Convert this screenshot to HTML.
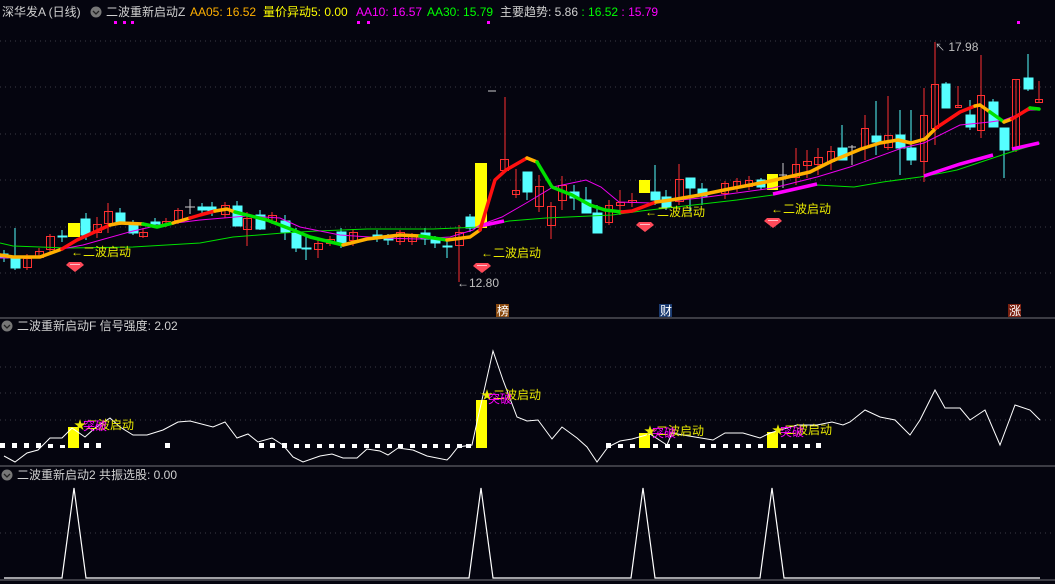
<!DOCTYPE html>
<html><head><meta charset="utf-8"><style>
html,body{margin:0;padding:0;background:#05050f;}
svg{display:block;}
text{font-family:"Liberation Sans","Noto Sans CJK SC",sans-serif;font-size:12px;}
</style></head><body>
<svg width="1055" height="584" viewBox="0 0 1055 584" xmlns="http://www.w3.org/2000/svg">
<rect width="1055" height="584" fill="#05050f"/>
<g stroke="#3a3a44" stroke-dasharray="1,4" stroke-width="1">
<line x1="0" y1="41" x2="1055" y2="41"/><line x1="0" y1="87" x2="1055" y2="87"/>
<line x1="0" y1="134" x2="1055" y2="134"/><line x1="0" y1="180" x2="1055" y2="180"/>
<line x1="0" y1="227" x2="1055" y2="227"/><line x1="0" y1="273" x2="1055" y2="273"/>
<line x1="0" y1="367" x2="1055" y2="367"/><line x1="0" y1="393" x2="1055" y2="393"/>
<line x1="0" y1="420" x2="1055" y2="420"/><line x1="0" y1="533" x2="1055" y2="533"/>
</g>
<g stroke="#3c3c44" stroke-width="2">
<line x1="0" y1="318" x2="1055" y2="318"/><line x1="0" y1="466" x2="1055" y2="466"/><line x1="0" y1="580" x2="1055" y2="580"/>
</g>
<text x="2" y="16" fill="#d0d0d0">深华发A (日线)</text>
<circle cx="96" cy="12" r="5.5" fill="#777"/><path d="M93 11l3 3 3-3" stroke="#222" fill="none" stroke-width="1.3"/>
<text x="106" y="16" fill="#d0d0d0">二波重新启动Z</text>
<text x="190" y="16" fill="#ffb000">AA05: 16.52</text>
<text x="263" y="16" fill="#ffff00">量价异动5: 0.00</text>
<text x="356" y="16" fill="#ff00ff">AA10: 16.57</text>
<text x="427" y="16" fill="#00ff00">AA30: 15.79</text>
<text x="500" y="16" fill="#d0d0d0">主要趋势: 5.86 <tspan fill="#00ff00">: 16.52</tspan><tspan fill="#ff00ff"> : 15.79</tspan></text>
<g fill="#ff00ff"><rect x="114" y="21" width="3" height="3"/><rect x="123" y="21" width="3" height="3"/><rect x="131" y="21" width="3" height="3"/><rect x="357" y="21" width="3" height="3"/><rect x="367" y="21" width="3" height="3"/><rect x="487" y="21" width="3" height="3"/><rect x="1017" y="21" width="3" height="3"/></g>
<g stroke-width="1">
<g stroke="#55ffff" fill="#55ffff">
<line x1="4" y1="250" x2="4" y2="262"/><rect x="0" y="254" width="8" height="4"/>
<line x1="15" y1="228" x2="15" y2="270"/><rect x="11" y="258" width="9" height="10"/>
<line x1="62" y1="230" x2="62" y2="242"/><rect x="58" y="236" width="9" height="1"/>
<line x1="86" y1="213" x2="86" y2="240"/><rect x="81" y="219" width="9" height="16"/>
<line x1="120" y1="208" x2="120" y2="225"/><rect x="116" y="213" width="9" height="9"/>
<line x1="133" y1="220" x2="133" y2="235"/><rect x="129" y="225" width="9" height="8"/>
<line x1="155" y1="218" x2="155" y2="228"/><rect x="151" y="222" width="9" height="2"/>
<line x1="202" y1="203" x2="202" y2="213"/><rect x="198" y="207" width="9" height="3"/>
<line x1="212" y1="202" x2="212" y2="216"/><rect x="208" y="207" width="8" height="5"/>
<line x1="237" y1="201" x2="237" y2="226"/><rect x="233" y="206" width="9" height="20"/>
<line x1="260" y1="210" x2="260" y2="230"/><rect x="256" y="215" width="9" height="14"/>
<line x1="285" y1="215" x2="285" y2="240"/><rect x="281" y="221" width="9" height="11"/>
<line x1="296" y1="228" x2="296" y2="252"/><rect x="292" y="233" width="9" height="15"/>
<line x1="306" y1="236" x2="306" y2="260"/><rect x="302" y="248" width="9" height="1"/>
<line x1="341" y1="228" x2="341" y2="248"/><rect x="337" y="232" width="9" height="11"/>
<line x1="377" y1="230" x2="377" y2="242"/><rect x="373" y="235" width="9" height="3"/>
<line x1="388" y1="234" x2="388" y2="245"/><rect x="384" y="237" width="9" height="3"/>
<line x1="425" y1="228" x2="425" y2="245"/><rect x="421" y="233" width="9" height="6"/>
<line x1="435" y1="236" x2="435" y2="248"/><rect x="431" y="240" width="9" height="3"/>
<line x1="447" y1="240" x2="447" y2="258"/><rect x="443" y="246" width="9" height="1"/>
<line x1="470" y1="214" x2="470" y2="232"/><rect x="466" y="217" width="9" height="11"/>
<line x1="527" y1="175" x2="527" y2="200"/><rect x="523" y="172" width="9" height="20"/>
<line x1="574" y1="185" x2="574" y2="210"/><rect x="570" y="192" width="9" height="6"/>
<line x1="586" y1="187" x2="586" y2="213"/><rect x="582" y="200" width="9" height="13"/>
<line x1="597" y1="205" x2="597" y2="233"/><rect x="593" y="213" width="9" height="20"/>
<line x1="655" y1="165" x2="655" y2="205"/><rect x="651" y="192" width="9" height="8"/>
<line x1="666" y1="190" x2="666" y2="210"/><rect x="662" y="197" width="9" height="10"/>
<line x1="690" y1="178" x2="690" y2="212"/><rect x="686" y="178" width="9" height="10"/>
<line x1="702" y1="183" x2="702" y2="205"/><rect x="698" y="189" width="9" height="7"/>
<line x1="761" y1="178" x2="761" y2="190"/><rect x="757" y="180" width="8" height="7"/>
<line x1="842" y1="125" x2="842" y2="160"/><rect x="838" y="148" width="9" height="12"/>
<line x1="876" y1="101" x2="876" y2="155"/><rect x="872" y="136" width="9" height="6"/>
<line x1="900" y1="110" x2="900" y2="175"/><rect x="896" y="135" width="9" height="13"/>
<line x1="911" y1="110" x2="911" y2="165"/><rect x="907" y="148" width="9" height="12"/>
<line x1="946" y1="82" x2="946" y2="108"/><rect x="942" y="84" width="8" height="24"/>
<line x1="970" y1="100" x2="970" y2="130"/><rect x="966" y="115" width="9" height="12"/>
<line x1="993" y1="99" x2="993" y2="127"/><rect x="989" y="102" width="9" height="25"/>
<line x1="1004" y1="128" x2="1004" y2="178"/><rect x="1000" y="128" width="9" height="22"/>
<line x1="1028" y1="54" x2="1028" y2="91"/><rect x="1024" y="78" width="9" height="11"/>
</g>
<g stroke="#ff3030" fill="none">
<line x1="27" y1="254" x2="27" y2="270"/><rect x="23.5" y="258.5" width="8" height="9"/>
<line x1="39" y1="248" x2="39" y2="258"/><rect x="35.5" y="251.5" width="8" height="6"/>
<line x1="50" y1="234" x2="50" y2="252"/><rect x="46.5" y="236.5" width="8" height="13"/>
<line x1="97" y1="217" x2="97" y2="238"/><rect x="93.5" y="224.5" width="8" height="8"/>
<line x1="108" y1="203" x2="108" y2="233"/><rect x="104.5" y="211.5" width="8" height="12"/>
<line x1="143" y1="228" x2="143" y2="238"/><rect x="139.5" y="232.5" width="8" height="4"/>
<line x1="166" y1="218" x2="166" y2="227"/><rect x="162.5" y="221.5" width="8" height="3"/>
<line x1="178" y1="208" x2="178" y2="224"/><rect x="174.5" y="210.5" width="8" height="10"/>
<line x1="225" y1="202" x2="225" y2="218"/><rect x="221.5" y="205.5" width="8" height="9"/>
<line x1="247" y1="212" x2="247" y2="246"/><rect x="243.5" y="218.5" width="8" height="11"/>
<line x1="272" y1="212" x2="272" y2="224"/><rect x="268.5" y="215.5" width="8" height="6"/>
<line x1="318" y1="238" x2="318" y2="258"/><rect x="314.5" y="243.5" width="8" height="6"/>
<line x1="330" y1="236" x2="330" y2="246"/><rect x="326.5" y="239.5" width="8" height="4"/>
<line x1="353" y1="229" x2="353" y2="246"/><rect x="349.5" y="232.5" width="8" height="8"/>
<line x1="400" y1="230" x2="400" y2="245"/><rect x="396.5" y="232.5" width="8" height="9"/>
<line x1="412" y1="233" x2="412" y2="245"/><rect x="408.5" y="236.5" width="8" height="5"/>
<line x1="459" y1="225" x2="459" y2="282"/><rect x="455.5" y="232.5" width="8" height="13"/>
<line x1="505" y1="97" x2="505" y2="171"/><rect x="500.5" y="159.5" width="8" height="11"/>
<line x1="516" y1="169" x2="516" y2="198"/><rect x="512.5" y="190.5" width="7" height="4"/>
<line x1="539" y1="175" x2="539" y2="212"/><rect x="535.5" y="186.5" width="8" height="20"/>
<line x1="551" y1="202" x2="551" y2="239"/><rect x="547.5" y="206.5" width="8" height="19"/>
<line x1="562" y1="176" x2="562" y2="210"/><rect x="558.5" y="185.5" width="8" height="15"/>
<line x1="609" y1="200" x2="609" y2="225"/><rect x="605.5" y="205.5" width="7" height="17"/>
<line x1="620" y1="190" x2="620" y2="215"/><rect x="616.5" y="202.5" width="8" height="3"/>
<line x1="632" y1="193" x2="632" y2="207"/><rect x="628.5" y="200.5" width="8" height="2"/>
<line x1="679" y1="164" x2="679" y2="205"/><rect x="675.5" y="179.5" width="8" height="22"/>
<line x1="725" y1="181" x2="725" y2="199"/><rect x="721.5" y="183.5" width="7" height="10"/>
<line x1="737" y1="178" x2="737" y2="192"/><rect x="733.5" y="181.5" width="7" height="6"/>
<line x1="749" y1="176" x2="749" y2="190"/><rect x="745.5" y="180.5" width="7" height="6"/>
<line x1="796" y1="148" x2="796" y2="185"/><rect x="792.5" y="164.5" width="7" height="13"/>
<line x1="807" y1="150" x2="807" y2="178"/><rect x="803.5" y="161.5" width="8" height="4"/>
<line x1="818" y1="148" x2="818" y2="175"/><rect x="814.5" y="157.5" width="8" height="7"/>
<line x1="831" y1="146" x2="831" y2="170"/><rect x="827.5" y="151.5" width="7" height="10"/>
<line x1="865" y1="115" x2="865" y2="160"/><rect x="861.5" y="128.5" width="7" height="19"/>
<line x1="888" y1="96" x2="888" y2="150"/><rect x="884.5" y="135.5" width="8" height="12"/>
<line x1="924" y1="88" x2="924" y2="182"/><rect x="920.5" y="115.5" width="7" height="46"/>
<line x1="935" y1="42" x2="935" y2="145"/><rect x="931.5" y="84.5" width="7" height="44"/>
<line x1="958" y1="86" x2="958" y2="108"/><rect x="955.5" y="105.5" width="6" height="2"/>
<line x1="981" y1="55" x2="981" y2="138"/><rect x="977.5" y="95.5" width="7" height="35"/>
<line x1="1016" y1="79" x2="1016" y2="152"/><rect x="1012.5" y="79.5" width="7" height="70"/>
<line x1="1039" y1="81" x2="1039" y2="102"/><rect x="1035.5" y="99.5" width="7" height="3"/>
</g>
<g stroke="#cccccc"><line x1="190" y1="199" x2="190" y2="214"/><line x1="185" y1="207" x2="195" y2="207"/>
<line x1="783" y1="163" x2="783" y2="188"/><line x1="779" y1="175" x2="787" y2="175"/>
<line x1="852" y1="145" x2="852" y2="165"/><line x1="848" y1="147" x2="856" y2="147"/>
<line x1="488" y1="91" x2="496" y2="91"/></g>
</g>
<g fill="#ffff00"><rect x="68" y="223" width="12" height="14"/><rect x="475" y="163" width="12" height="65"/><rect x="639" y="180" width="11" height="13"/><rect x="767" y="174" width="11" height="16"/></g>
<polyline fill="none" stroke="#00e000" stroke-width="1" points="0,243 13,246 67,248 133,247 200,243 233,237 283,233 317,231 367,229 433,229 480,227 509,221 546,218 612,215 641,211 737,200 773,195 817,185 854,187 883,182 920,177 942,173 957,170 1008,153 1040,143"/>
<polyline fill="none" stroke="#ee00ee" stroke-width="1" points="0,258 43,257 62,249 83,245 133,231 160,225 200,220 247,216 280,218 300,227 340,235 383,238 417,239 450,237 473,230 480,225 502,217 528,202 553,187 586,180 601,187 619,202 652,203 700,198 773,188 817,177 850,167 902,148 924,143 960,125 990,122 1004,120 1030,110 1040,110"/>
<polyline fill="none" stroke="#ff00ff" stroke-width="3.5" points="480,226 504,221"/>
<polyline fill="none" stroke="#ff00ff" stroke-width="3.5" points="773,194 817,184"/>
<polyline fill="none" stroke="#ff00ff" stroke-width="3.5" points="924,176 960,164 993,155"/>
<polyline fill="none" stroke="#ff00ff" stroke-width="3.5" points="1012,149 1039,143"/>
<g fill="none" stroke-width="3.5" stroke-linejoin="round" stroke-linecap="round">
<polyline stroke="#ffb000" points="0,255 13,257 40,257 62,249"/>
<polyline stroke="#ff1010" points="62,249 77,240 110,225"/>
<polyline stroke="#ffb000" points="110,225 120,223 143,224"/>
<polyline stroke="#00e000" points="143,224 157,227 173,223"/>
<polyline stroke="#ffb000" points="173,223 190,218"/>
<polyline stroke="#ff1010" points="190,218 200,215 215,211"/>
<polyline stroke="#ffb000" points="215,211 227,209 235,212"/>
<polyline stroke="#00e000" points="235,212 267,220 293,230 310,237 343,245"/>
<polyline stroke="#ffb000" points="343,245 367,239 400,235 420,236"/>
<polyline stroke="#00e000" points="420,236 447,240"/>
<polyline stroke="#ffb000" points="447,240 470,237 480,230"/>
<polyline stroke="#ff1010" points="480,230 495,180 506,170 527,158"/>
<polyline stroke="#ffb000" points="527,158 537,162"/>
<polyline stroke="#00e000" points="537,162 552,187 572,195 590,205 605,210 622,212"/>
<polyline stroke="#ff1010" points="622,212 632,211 656,202"/>
<polyline stroke="#ffb000" points="656,202 671,200 700,195 729,189 766,182 810,172 832,161 861,149 880,143 898,140 911,143 925,139 936,128"/>
<polyline stroke="#ff1010" points="936,128 960,112 975,106"/>
<polyline stroke="#ffb000" points="975,106 980,105 990,112"/>
<polyline stroke="#00e000" points="990,112 1004,122"/>
<polyline stroke="#ffb000" points="1004,122 1012,119"/>
<polyline stroke="#ff1010" points="1012,119 1030,108"/>
<polyline stroke="#00e000" points="1030,108 1039,109"/>
</g>
<g fill="#e8e800"><text x="71" y="256">←二波启动</text><text x="481" y="257">←二波启动</text><text x="645" y="216">←二波启动</text><text x="771" y="213">←二波启动</text></g>
<g fill="#ff4a5a"><path d="M69 262h12l3 3-9 7-9-7z"/><path d="M476 263h12l3 3-9 7-9-7z"/><path d="M639 222h12l3 3-9 7-9-7z"/><path d="M767 218h12l3 3-9 7-9-7z"/></g>
<g fill="#ffc0c8"><rect x="70" y="264" width="10" height="1"/><rect x="477" y="265" width="10" height="1"/><rect x="640" y="224" width="10" height="1"/><rect x="768" y="220" width="10" height="1"/></g>
<text x="457" y="287" fill="#c0c0c0">←12.80</text>
<text x="935" y="51" fill="#c0c0c0"><tspan font-size="10">↖</tspan> 17.98</text>
<rect x="496" y="304" width="13" height="13" fill="#8a4a10"/><text x="497" y="315" fill="#fff" font-size="11">榜</text>
<rect x="659" y="304" width="13" height="13" fill="#1a3a70"/><text x="660" y="315" fill="#fff" font-size="11">财</text>
<rect x="1008" y="304" width="13" height="13" fill="#7a2010"/><text x="1009" y="315" fill="#fff" font-size="11">涨</text>
<circle cx="7" cy="326" r="5.5" fill="#777"/><path d="M4 325l3 3 3-3" stroke="#222" fill="none" stroke-width="1.3"/>
<text x="17" y="330" fill="#d0d0d0">二波重新启动F  信号强度: 2.02</text>
<g fill="#ffffff">
<rect x="0" y="443" width="5" height="5"/><rect x="12" y="443" width="5" height="5"/><rect x="24" y="443" width="5" height="5"/><rect x="36" y="443" width="5" height="5"/><rect x="48" y="444" width="5" height="4"/><rect x="60" y="445" width="5" height="3"/><rect x="84" y="443" width="5" height="5"/><rect x="96" y="443" width="5" height="5"/><rect x="165" y="443" width="5" height="5"/>
<rect x="259" y="443" width="5" height="5"/><rect x="270" y="443" width="5" height="5"/><rect x="282" y="443" width="5" height="5"/><rect x="294" y="444" width="5" height="4"/><rect x="305" y="444" width="5" height="4"/><rect x="317" y="444" width="5" height="4"/><rect x="329" y="444" width="5" height="4"/><rect x="340" y="444" width="5" height="4"/><rect x="352" y="444" width="5" height="4"/><rect x="364" y="444" width="5" height="4"/><rect x="375" y="444" width="5" height="4"/><rect x="387" y="444" width="5" height="4"/><rect x="398" y="444" width="5" height="4"/><rect x="410" y="444" width="5" height="4"/><rect x="422" y="444" width="5" height="4"/><rect x="433" y="444" width="5" height="4"/><rect x="445" y="444" width="5" height="4"/><rect x="457" y="444" width="5" height="4"/><rect x="466" y="444" width="5" height="4"/>
<rect x="606" y="443" width="5" height="5"/><rect x="618" y="444" width="5" height="4"/><rect x="630" y="444" width="5" height="4"/><rect x="653" y="444" width="5" height="4"/><rect x="665" y="444" width="5" height="4"/><rect x="677" y="444" width="5" height="4"/><rect x="700" y="444" width="5" height="4"/><rect x="711" y="444" width="5" height="4"/><rect x="723" y="444" width="5" height="4"/><rect x="735" y="444" width="5" height="4"/><rect x="746" y="444" width="5" height="4"/><rect x="758" y="444" width="5" height="4"/><rect x="781" y="444" width="5" height="4"/><rect x="793" y="444" width="5" height="4"/><rect x="805" y="444" width="5" height="4"/><rect x="816" y="443" width="5" height="5"/>
</g>
<g fill="#ffff00"><rect x="68" y="427" width="11" height="21"/><rect x="476" y="400" width="11" height="48"/><rect x="639" y="433" width="11" height="15"/><rect x="767" y="432" width="11" height="16"/></g>
<polyline fill="none" stroke="#ffffff" stroke-width="1" points="4,456 15,462 27,453 38,450 50,438 62,438 72,428 85,437 95,428 110,418 120,427 133,435 147,435 163,430 178,422 190,421 213,427 225,422 237,438 248,434 258,442 272,438 283,445 293,457 303,462 320,456 332,454 343,458 357,458 367,449 380,451 388,455 398,448 413,450 427,456 447,460 450,457 458,447 472,445 477,422 493,351 503,380 517,417 527,421 538,420 552,439 562,427 577,438 587,447 597,462 608,447 620,441 632,439 650,434 667,445 672,433 683,435 713,440 725,433 743,433 760,438 770,433 797,425 817,425 832,422 843,425 850,422 865,410 880,417 895,420 910,435 920,420 935,390 945,408 960,408 970,420 985,410 1000,445 1015,405 1030,410 1040,420"/>
<g fill="#e8e800"><text x="74" y="429">★二波启动</text><text x="481" y="399">★二波启动</text><text x="644" y="435">★二波启动</text><text x="772" y="434">★二波启动</text></g>
<g fill="#ff00ff"><text x="83" y="430">突破</text><text x="488" y="403">突破</text><text x="652" y="437">突破</text><text x="780" y="436">突破</text></g>
<circle cx="7" cy="475" r="5.5" fill="#777"/><path d="M4 474l3 3 3-3" stroke="#222" fill="none" stroke-width="1.3"/>
<text x="17" y="479" fill="#d0d0d0">二波重新启动2  共振选股: 0.00</text>
<polyline fill="none" stroke="#ffffff" stroke-width="1.2" points="4,578 62,578 74,488 86,578 469,578 481,488 493,578 631,578 643,488 655,578 760,578 772,488 784,578 1040,578"/>
</svg>
</body></html>
